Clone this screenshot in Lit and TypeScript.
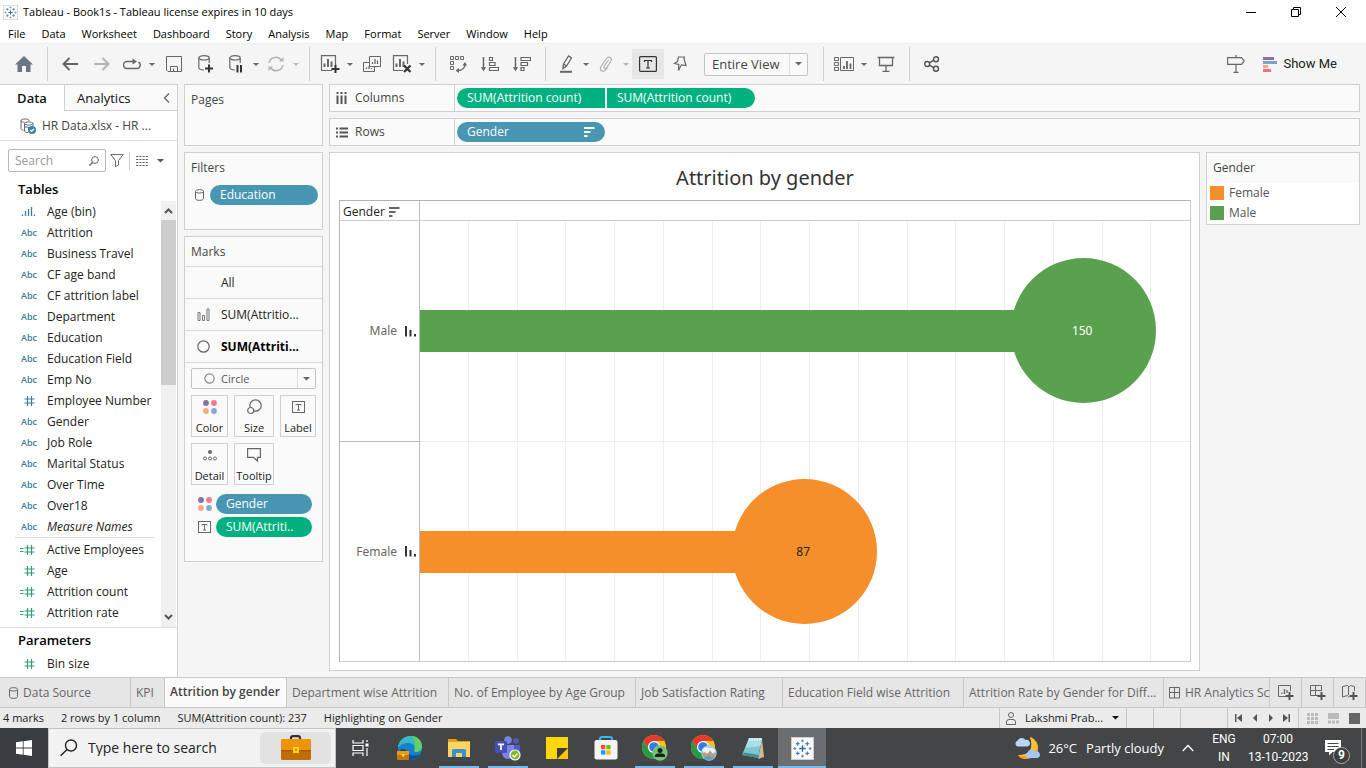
import { LitElement, html, svg, css, nothing } from "lit";
import type { TemplateResult, SVGTemplateResult } from "lit";
import { customElement } from "lit/decorators.js";
import { classMap } from "lit/directives/class-map.js";

const icon = (w: number, h: number, body: SVGTemplateResult, cls = "") =>
  html`<svg class="ic ${cls}" width=${w} height=${h} viewBox="0 0 ${w} ${h}" fill="none" aria-hidden="true">${body}</svg>`;

const G = "#666";

/* ---------- toolbar glyphs ---------- */
const home = icon(18, 16, svg`<path d="M9 0L18 8.5H15.5V16H11V10H7V16H2.500V8.500H0Z" fill="#6b7785"/>`);
const arrowL = icon(16, 14, svg`<path d="M7.500 1L1.500 7L7.500 13M1.500 7H16" stroke=${G} stroke-width="2"/>`);
const arrowR = icon(16, 14, svg`<path d="M8.500 1L14.500 7L8.500 13M14.500 7H0" stroke="#b4b4b4" stroke-width="2"/>`);
const redo = icon(18, 13, svg`<path d="M10 3.500H4A3.500 3.500 0 0 0 4 10.500H14A3.500 3.500 0 0 0 15.500 4" stroke=${G} stroke-width="1.500"/><path d="M9.500 0.500L14 3.500L9.500 6.500Z" fill=${G}/>`);
const save = icon(16, 16, svg`<path d="M.5 .5H15.500V15.500H2L.5 14ZM4.500 15V10.500H11.500V15M7.500 12.500V15" stroke=${G}/>`);
const cyl = svg`<ellipse cx="6" cy="2.800" rx="5.200" ry="2.200" stroke=${G} stroke-width="1.200"/><path d="M.8 3V12.500C1 14 3 15 6 15M11.200 3V8" stroke=${G} stroke-width="1.200"/>`;
const dbAdd = icon(16, 18, svg`${cyl}<path d="M11 9.500V17.500M7 13.500H15" stroke="#333" stroke-width="2"/>`);
const dbPause = icon(14, 18, svg`${cyl}<path d="M8.500 10V17.500M12 10V17.500" stroke="#333" stroke-width="2"/>`);
const refresh = icon(18, 16, svg`<path d="M2 7A6.800 6.800 0 0 1 14.500 4.500M16 9A6.800 6.800 0 0 1 3.500 11.500" stroke="#b4b4b4" stroke-width="1.500"/><path d="M12 5.500H16.500V1ZM6 10.500H1.500V15Z" fill="#b4b4b4"/>`);
const bars = svg`<path d="M4.500 12V8.500M8 12V4M11.500 12V6.500" stroke=${G} stroke-width="2"/>`;
const newSheet = icon(20, 18, svg`<path d="M12 15.500H1.500V.7H15.500V11" stroke=${G} stroke-width="1.200"/>${bars}<path d="M15.500 10V18M11.500 14H19.500" stroke="#333" stroke-width="2"/>`);
const clearSheet = icon(20, 18, svg`<path d="M11 15.500H1.500V.7H15.500V9" stroke=${G} stroke-width="1.200"/>${bars}<path d="M12 10.500L18.500 17M18.500 10.500L12 17" stroke="#333" stroke-width="2.200"/>`);
const dupSheet = icon(18, 16, svg`<path d="M6.500 .5H17.500V10.500H6.500ZM6 6.500H.5V15.500H11.500V11" stroke=${G}/><path d="M9.500 8V6M12 8V3M14.500 8V4.500M3.500 13V11.500M6 13V10M8.500 13V12" stroke=${G} stroke-width="1.300"/>`);
const swap = icon(17, 17, svg`<path d="M.5 .5H3.500V3.500H.5ZM5.500 .5H8.500V3.500H5.500ZM10.500 .5H13.500V3.500H10.500ZM.5 5.500H3.500V8.500H.5ZM.5 10.500H3.500V13.500H.5Z" stroke=${G}/><path d="M15 8C15 12 12 14.500 7.500 14.500" stroke=${G} stroke-width="1.400"/><path d="M12.500 9.500L15 6L17 9.500ZM9 12L5.500 14.500L9 17Z" fill=${G}/>`);
const sortAsc = icon(18, 15, svg`<path d="M2.500 0V12" stroke=${G} stroke-width="1.500"/><path d="M0 10H5L2.500 14.500Z" fill=${G}/><path d="M8.500 .5H11.500V3.500H8.500ZM8.500 5.500H14V8.500H8.500ZM8.500 10.500H17.500V13.500H8.500Z" stroke=${G} stroke-width="1.200"/>`);
const sortDesc = icon(18, 15, svg`<path d="M2.500 0V12" stroke=${G} stroke-width="1.500"/><path d="M0 10H5L2.500 14.500Z" fill=${G}/><path d="M8 .5H17.500V3.500H8ZM8 5.500H14.500V8.500H8ZM8 10.500H11V13.500H8Z" stroke=${G} stroke-width="1.200"/>`);
const pen = icon(14, 18, svg`<path d="M4.500 9L9.500 1L12.500 3L7.500 11L4 13.500ZM4.500 9L7.500 11" stroke=${G} stroke-width="1.300"/><path d="M1 16.800H13" stroke=${G} stroke-width="2"/>`);
const clip = icon(14, 16, svg`<path d="M9.500 4L5 10.500C4 12.500 6.500 13.500 7.500 12L12 5C13.500 2 9.500 -.5 7.500 2.500L2 10.500C-.3 14.500 4.500 17 7 13.500L9 10.500" stroke="#b0b0b0" stroke-width="1.200"/>`);
const textBox = icon(18, 16, svg`<rect x=".6" y=".6" width="16.800" height="14.800" rx="1" stroke="#333" stroke-width="1.200"/><path d="M5.500 6V4.500H12.500V6M9 4.500V12M7 12H11" stroke="#333" stroke-width="1.200"/>`);
const pin = icon(14, 16, svg`<path d="M5.500 1H11.500L11 3L12.500 7.500L13 9.500L8.500 8.800L5.500 14.500L5.800 8.500L1.500 7.500L4.500 5.500Z" stroke=${G} stroke-width="1.200"/>`);
const cards = icon(20, 15, svg`<path d="M.5 .5H4.500V3.500H.5ZM.5 5.500H4.500V8.500H.5ZM.5 10.500H4.500V13.500H.5ZM6.500 .5H19.500V13.500H6.500Z" stroke=${G}/><path d="M10 12V9M13 12V4M16.500 12V6.500" stroke=${G} stroke-width="1.800"/>`);
const present = icon(18, 16, svg`<path d="M.5 1.500H17.500M2.500 2V9.500H15.500V2M9 10V15M5.500 15.300H12.500" stroke=${G} stroke-width="1.300"/>`);
const share = icon(16, 16, svg`<circle cx="3.200" cy="8" r="2.500" stroke="#555" stroke-width="1.400"/><circle cx="12" cy="3.200" r="2.500" stroke="#555" stroke-width="1.400"/><circle cx="12" cy="12.800" r="2.500" stroke="#555" stroke-width="1.400"/><path d="M5.300 6.800L9.800 4.400M5.300 9.200L9.800 11.600" stroke="#555" stroke-width="1.400"/>`);
const sign = icon(18, 18, svg`<path d="M.6 2.600H14.500L17.300 6L14.500 9.400H.6ZM9 0V2.500M9 9.500V17M6.500 17.300H11.500" stroke=${G} stroke-width="1.200"/>`);
const showMe = icon(14, 15, svg`<path d="M0 0H11V3H0Z" fill="#88719b"/><path d="M0 4H14V7H0Z" fill="#7ba0cb"/><path d="M0 8H5V11H0Z" fill="#f4a880"/><path d="M0 12H8V15H0Z" fill="#f86e81"/>`);
const caretSvg = (w: number, c: string) => icon(w, Math.ceil(w / 2), svg`<path d="M0 0H${w}L${w / 2} ${w / 2}Z" fill=${c}/>`);

/* ---------- shared glyphs ---------- */
const tableau = (s: number) => html`<svg class="ic" width=${s} height=${s} viewBox="0 0 24 24" fill="none" aria-hidden="true">
  <rect width="24" height="24" fill="#fbfbfb"/><rect x=".5" y=".5" width="23" height="23" stroke="#ccc"/>
  <path d="M12 8.500V15.500M8.500 12H15.500" stroke="#2f6f9f" stroke-width="1.500"/>
  <path d="M7 5V9M5 7H9M17 5V9M15 7H19M7 15V19M5 17H9M17 15V19M15 17H19" stroke="#4b84ae" stroke-width="1.300"/>
  <path d="M12 2.500V5.500M10.500 4H13.500M12 18.500V21.500M10.500 20H13.500M4 10.500V13.500M2.500 12H5.500M20 10.500V13.500M18.500 12H21.500" stroke="#5f94b8" stroke-width="1.200"/></svg>`;
const dots = icon(14, 14, svg`<circle cx="3" cy="3" r="2.900" fill="#88719b"/><circle cx="11" cy="3" r="2.900" fill="#f8798a"/><circle cx="3" cy="11" r="2.900" fill="#f4ab82"/><circle cx="11" cy="11" r="2.900" fill="#87a7d0"/>`);
const labelT = icon(13, 12, svg`<rect x=".5" y=".5" width="12" height="11" stroke=${G}/><path d="M4 4.500V3.500H9V4.500M6.500 3.500V9M5 9H8" stroke=${G}/>`);
const sizeIc = icon(15, 16, svg`<circle cx="8.500" cy="6.500" r="5.700" stroke=${G} stroke-width="1.200"/><circle cx="3.700" cy="11.500" r="3" fill="#fafafa" stroke=${G} stroke-width="1.200"/>`);
const detailIc = icon(14, 11, svg`<circle cx="7" cy="2" r="2" fill=${G}/><circle cx="2" cy="8.500" r="1.500" stroke=${G}/><circle cx="7" cy="8.500" r="1.500" stroke=${G}/><circle cx="12" cy="8.500" r="1.500" stroke=${G}/>`);
const tipIc = icon(14, 14, svg`<path d="M.6 .6H13.400V9.400H10.500V13L6.500 9.400H.6Z" stroke=${G} stroke-width="1.200"/>`);
const sortMark = (c: string) => icon(11, 10, svg`<path d="M0 1H10.500M0 5H6.500M0 9H3.500" stroke=${c} stroke-width="2"/>`);
const miniBars = icon(11, 11, svg`<path d="M1 0V10.500M5.500 4V10.500M10 8V10.500" stroke="#333" stroke-width="2"/>`);
const cylSm = icon(9, 12, svg`<path d="M.5 2.500C.5 0 8.500 0 8.500 2.500V9.500C8.500 12 .5 12 .5 9.500ZM.5 2.500C.5 4.500 8.500 4.500 8.500 2.500" stroke=${G}/>`);
const dash = icon(11, 12, svg`<path d="M.5 .5H10.500V11H.5ZM5.500 .5V11M.5 5.500H10.500" stroke=${G}/>`);

const typeIcon = (t: string) => {
  if (t === "abc") return html`<span class="abc">Abc</span>`;
  if (t === "bin") return icon(16, 10, svg`<path d="M2.500 9V7.500M5.500 9V4M8.500 9V2M11.500 9V0M14.500 9V7.500" stroke="#3a7d96" stroke-width="1.300"/>`);
  const c = t === "numb" ? "#3a7d96" : "#2f9e72";
  return icon(15, 10, svg`<path d="M7.500 0V10M11.500 0V10M4.500 3H14.500M4.500 7H14.500" stroke=${c} stroke-width="1.200"/>${t === "calc" ? svg`<path d="M0 3.500H3.500M0 6.500H3.500" stroke=${c}/>` : nothing}`);
};

/* ---------- taskbar glyphs ---------- */
const win = icon(16, 16, svg`<path d="M0 2.300L6.800 1.300V7.600H0ZM7.600 1.200L16 0V7.600H7.600ZM0 8.400H6.800V14.700L0 13.700ZM7.600 8.400H16V16L7.600 14.800Z" fill="#fff"/>`);
const search = icon(18, 18, svg`<circle cx="11" cy="6.500" r="5.500" stroke="#222" stroke-width="1.400"/><path d="M7 10.500L.7 16.800" stroke="#222" stroke-width="1.400"/>`);
const briefcase = icon(32, 26, svg`<path d="M11 5V3C11 1.800 12 1.200 13 1.200H18C19.300 1.200 20 2 20 3V5" stroke="#333" stroke-width="2.200"/><rect x="1" y="4" width="30" height="21" rx="1.500" fill="#c06e07"/><path d="M1 5.500Q1 4 2.500 4H29.500Q31 4 31 5.500V15H1Z" fill="#ef9309"/><path d="M1 15H31V16.500H1Z" fill="#a85a05"/><rect x="13" y="12" width="6" height="6" fill="#f8d915"/><rect x="15" y="14" width="2" height="2" fill="#b98b08"/>`);
const taskview = icon(17, 16, svg`<path d="M1 0V3H11V0M1 16V13H11V16M1 5.500H11V10.500H1ZM15 0V2M15 8V16" stroke="#fff" stroke-width="1.200"/><rect x="13.500" y="3.500" width="3" height="3" fill="#fff"/>`);
const edge = icon(26, 26, svg`<circle cx="13" cy="13" r="12" fill="#1580cc"/><path d="M1 13C1 6 7 1 13 1C20 1 25 6 25 11.500C25 16 21 17.500 17 16.500C19 12 16 8 11.500 8C6 8 2 10.500 1 13Z" fill="#37b9c5"/><path d="M14 1C21 1 25 6 25 11.500C25 16 21 17.500 17 16.500C19.500 12 18 4 14 1Z" fill="#62cf61"/><path d="M10 14C10 20 16 22.500 23 19C19 25 12 26 9 24Z" fill="#0b4f9e"/><path d="M4 16V15H8V16" stroke="#222"/><rect x="0" y="16" width="12" height="9" rx="1" fill="#c9770c"/><path d="M0 16H12V20H0Z" fill="#f09a12"/><rect x="5" y="19" width="2.500" height="2.500" fill="#fbe02b"/>`);
const explorer = icon(22, 20, svg`<path d="M0 1H8L10 3H22V18H0Z" fill="#e6a212"/><path d="M0 4H22V19H0Z" fill="#fcd462"/><path d="M4 19V12.500Q4 11 5.500 11H16.500Q18 11 18 12.500V19H14V15H8V19Z" fill="#3b8fd6"/>`);
const teams = icon(26, 25, svg`<circle cx="13" cy="4" r="3.800" fill="#7b83eb"/><circle cx="21" cy="5" r="2.800" fill="#5059c9"/><path d="M15 9H25V17A5 5 0 0 1 16 20Z" fill="#5059c9"/><path d="M7 9H19V17A6 6 0 0 1 7 17Z" fill="#7b83eb"/><rect x="0" y="5" width="12" height="12" rx="1" fill="#464eb8"/><path d="M3 8.300H9M6 8.300V14" stroke="#fff" stroke-width="1.700"/><circle cx="20" cy="19" r="5" fill="#7db51a" stroke="#fff" stroke-width="1.200"/><path d="M17.500 19L19.300 20.900L22.500 17.500" stroke="#fff" stroke-width="1.400"/>`);
const sticky = icon(22, 22, svg`<path d="M0 0H22V22H0Z" fill="#ffd60a"/><path d="M22 11V22H11Z" fill="#ffc400"/><path d="M11 22V11H22Z" fill="#3b3b3b"/>`);
const store = icon(24, 24, svg`<path d="M6 6V3Q6 1 8 1H16Q18 1 18 3V6" stroke="#35b8ef" stroke-width="2"/><rect x=".5" y="4" width="23" height="19.500" rx="2" fill="#f4f4f4"/><path d="M7 9H11.300V13.300H7Z" fill="#f25022"/><path d="M12.300 9H16.600V13.300H12.300Z" fill="#7fba00"/><path d="M7 14.300H11.300V18.600H7Z" fill="#00a4ef"/><path d="M12.300 14.300H16.600V18.600H12.300Z" fill="#ffb900"/>`);
const chromeBase = svg`<circle cx="12" cy="12" r="12" fill="#fbc116"/><path d="M12 0A12 12 0 0 1 22.400 6H12L6.800 15L1.600 6A12 12 0 0 1 12 0Z" fill="#e33b2e"/><path d="M1.600 6A12 12 0 0 0 12 24L17 15A6 6 0 0 1 6.800 15Z" fill="#249b48"/><circle cx="12" cy="12" r="6" fill="#fff"/><circle cx="12" cy="12" r="4.800" fill="#2f7de9"/>`;
const chromeA = icon(26, 26, svg`${chromeBase}<circle cx="18" cy="18" r="7.700" fill="#76c079"/><circle cx="18" cy="15.500" r="2.500" fill="#16241a"/><path d="M13 22V21Q13 18.500 16 18.500H20Q23 18.500 23 21V22Z" fill="#16241a"/>`);
const chromeB = icon(26, 26, svg`${chromeBase}<circle cx="18" cy="18" r="7.700" fill="#9ecae8"/><path d="M11 15Q14 11 18 13Q22 12 25 16L22 18H13Z" fill="#e9f4fa"/><path d="M10.700 19L14 17L16 19L19 15.500L22 19L25 18.500A7.700 7.700 0 0 1 23 23L14 23.500Z" fill="#b79d7c"/><path d="M12.500 23L17 21L23 23A7.700 7.700 0 0 1 12.500 23Z" fill="#4ea3c9"/>`);
const notepad = icon(22, 22, svg`<path d="M20 2L22 20L16 22Z" fill="#ccb98f"/><path d="M7 1H20L16 21L0 18Z" fill="#7fc6d3"/><path d="M7 1H20L18.500 9L3.500 11Z" fill="#a9e0e6"/><path d="M0 18L16 21L16.500 18L2 15.500Z" fill="#418c9b"/><path d="M7 2.500H20" stroke="#e7f5f6" stroke-width="2" stroke-dasharray="1.500 1"/>`);
const weather = icon(26, 24, svg`<path d="M15 1C27 5 26 23 11 23C6 23 4 21 3 19C15 20 19 12 15 1Z" fill="#f5a01d"/><path d="M15 1C22 4 24 11 21 15C17 20 9 21 3 19C15 20 19 12 15 1Z" fill="#fbc13e"/><path d="M2.500 10.500A3 3 0 0 1 2.500 4.800A4.500 4.500 0 0 1 10.500 4A3.300 3.300 0 0 1 12.500 10.500Z" fill="#b9d4fb"/><path d="M12.500 22A3 3 0 0 1 12.500 16.500A4.500 4.500 0 0 1 20.500 15.500A3.300 3.300 0 0 1 22.500 22Z" fill="#a6c5f5"/>`);

interface Mark { name: string; value: number; tone: string; }
const marks: Mark[] = [
  { name: "Male", value: 150, tone: "male" },
  { name: "Female", value: 87, tone: "female" },
];
/* The marks axis runs to about 174 heads across the pane. */
const axisMax = 173.9;
const gridLines = Array.from({ length: 15 });

@customElement("app-root")
export class AppRoot extends LitElement {
  static styles = css`
    :host { display: block; height: 100vh; min-height: 640px; color: #222; font: 12px/16px "Open Sans", "Noto Sans", sans-serif; }
    * { box-sizing: border-box; }
    button, input, select { font: inherit; color: inherit; margin: 0; }
    button { border: 0; background: none; padding: 0; display: inline-flex; align-items: center; justify-content: center; }
    a { color: inherit; text-decoration: none; }
    ul { list-style: none; margin: 0; padding: 0; }
    h1, h2, h3 { margin: 0; font: inherit; }
    .ic { display: block; flex: none; }
    .app { height: 100%; display: flex; flex-direction: column; background: #f5f5f5; overflow: hidden; white-space: nowrap; }

    .title { height: 24px; flex: none; display: flex; align-items: center; gap: 5px; padding: 0 3px; background: #fff; color: #000; font-size: 11px; }
    .title h1 { flex: 1; }
    .wc { width: 45px; height: 22px; }
    .menu { height: 19px; flex: none; display: flex; align-items: center; gap: 16px; padding: 1px 0 0 8px; background: #fff; color: #000; font-size: 11px; }

    .tools { height: 41px; flex: none; display: flex; align-items: center; border-top: 1px solid #eee; }
    .grp { display: flex; align-items: center; padding: 0 7px 0 6px; height: 34px; border-right: 1px solid #d0d0d0; }
    .grp.first { padding: 0; }
    .grp.last { border: 0; }
    .tb { width: 32px; height: 30px; }
    .tb.home { width: 47px; }
    .tb.m { width: 28px; }
    .tb.c { width: 12px; }
    .tb.on { background: #e6e6e6; }
    .grp.fit { padding-right: 15px; }
    .sel { position: relative; display: flex; align-items: center; border: 1px solid #c4c4c4; background: #fafafa; border-radius: 2px; }
    .sel select { appearance: none; border: 0; background: none; width: 100%; height: 100%; outline: 0; padding: 0 18px 0 7px; }
    .sel .arr { position: absolute; right: 0; top: 0; bottom: 0; width: 18px; display: grid; place-items: center; border-left: 1px solid #ddd; pointer-events: none; }
    .fitbox { width: 104px; height: 23px; margin-left: 8px; color: #444; font-size: 13px; }
    .grow { flex: 1; }
    .showme { gap: 6px; padding: 0 29px 0 18px; font: 13px/18px Roboto, sans-serif; color: #222; }

    .main { flex: 1; min-height: 0; display: grid; grid-template-columns: 178px 139px minmax(0, 1fr); column-gap: 6px; }
    .data { background: #fff; border-right: 1px solid #d0d0d0; border-top: 1px solid #d0d0d0; display: flex; flex-direction: column; min-height: 0; overflow: hidden; }
    .dtabs { display: flex; height: 26px; flex: none; font-size: 13px; color: #111; }
    .dtabs .cur { width: 64px; font-weight: 600; }
    .dtabs .rest { flex: 1; display: flex; justify-content: space-between; align-items: center; padding: 0 7px 0 12px; background: #fafafa; border-left: 1px solid #d0d0d0; border-bottom: 1px solid #d0d0d0; }
    .src { height: 30px; flex: none; display: flex; align-items: center; gap: 6px; padding-left: 20px; border-bottom: 1px solid #e0e0e0; color: #444; }
    .find { display: flex; align-items: center; height: 39px; flex: none; padding-left: 8px; }
    .box { width: 98px; height: 23px; display: flex; align-items: center; border: 1px solid #b8b8b8; border-radius: 2px; padding: 0 6px; }
    .box input { border: 0; outline: 0; padding: 0; background: none; width: 100%; min-width: 0; }
    .box input::placeholder { color: #999; }
    .find .filt { margin: 0 5px 0 4px; }
    .find .view { border-left: 1px solid #ccc; height: 18px; padding-left: 6px; gap: 9px; }
    h2.sec { font: 600 13px/18px "Open Sans", sans-serif; color: #000; padding-left: 18px; flex: none; }
    .tables { height: 21px; }
    .scroll { display: flex; flex: 1; min-height: 0; }
    .fields { flex: 1; min-width: 0; overflow: hidden; color: #222; }
    .bar { width: 15px; background: #f0f0f0; display: flex; flex-direction: column; align-items: center; padding: 7px 0; margin-right: 1px; }
    .bar .thumb { width: 15px; flex: 0 0 40%; background: #cdcdcd; margin-top: 6px; }
    .bar .space { flex: 1; }
    .f { display: grid; grid-template-columns: 27px 1fr; align-items: center; height: 21px; padding-left: 20px; }
    .f.i { font-style: italic; }
    .abc { font: 600 9px/12px "Open Sans", sans-serif; color: #3a7d96; padding-left: 1px; }
    .meas { border-top: 1px solid #ddd; margin: 0 7px 0 15px; padding-top: 1px; }
    .meas .f { padding-left: 5px; }
    .params { border-top: 1px solid #ddd; padding: 3px 0; flex: none; }
    .params .f { margin-top: 4px; }

    .side { display: flex; flex-direction: column; gap: 6px; min-width: 0; }
    .card { background: #fafafa; border: 1px solid #d0d0d0; color: #444; }
    .card h3 { padding: 7px 6px 6px; }
    .pages { height: 62px; }
    .filters { height: 78px; }
    .marks { height: 326px; }
    .pill { display: flex; align-items: center; justify-content: space-between; height: 20px; border-radius: 10px; color: #fff; background: #4996b2; padding: 0 10px; font-weight: 500; }
    .pill.g { background: #00b180; }
    .pill.flat { border-radius: 10px 0 0 10px; }
    .pill.flat + .pill { border-radius: 0 10px 10px 0; }
    .frow { display: flex; align-items: center; gap: 6px; padding: 3px 4px 0 10px; }
    .frow .pill { flex: 1; }
    .mk { display: grid; grid-template-columns: 36px 1fr; align-items: center; width: 100%; height: 32px; border-top: 1px solid #d8d8d8; justify-items: start; color: #222; }
    .mk .ic { justify-self: center; }
    .mk.cur { font-weight: 700; color: #000; }
    .mtype { border-top: 1px solid #d8d8d8; padding: 5px 6px 0; }
    .shape { height: 21px; font-size: 11px; color: #555; }
    .shape .o { margin-left: 12px; }
    .shape select { padding-left: 6px; }
    .btns { display: grid; grid-template-columns: 37px 40px 36px; gap: 6px; padding: 6px 6px 0; }
    .btns button { height: 42px; border: 1px solid #d0d0d0; flex-direction: column; justify-content: flex-end; gap: 3px; font-size: 11px; line-height: 16px; color: #222; }
    .btns .pic { height: 20px; display: grid; place-items: center; }
    .enc { display: grid; grid-template-columns: 14px 96px; align-items: center; gap: 3px 4px; padding: 9px 0 0 13px; }

    .work { display: flex; flex-direction: column; gap: 6px; min-width: 0; min-height: 0; padding: 0 6px 6px 0; }
    .shelf { height: 28px; flex: none; display: flex; align-items: center; background: #fafafa; border: 1px solid #d0d0d0; }
    .shelf .lab { width: 125px; height: 26px; display: flex; align-items: center; gap: 7px; padding-left: 6px; border-right: 1px solid #d0d0d0; color: #444; }
    .pills { display: flex; gap: 2px; padding-left: 2px; }
    .pills .pill { width: 148px; }
    .lower { flex: 1; min-height: 0; display: grid; grid-template-columns: minmax(0, 1fr) 154px; grid-template-rows: minmax(0, 1fr); column-gap: 6px; align-items: start; }
    .viz { height: 100%; background: #fff; border: 1px solid #d0d0d0; padding: 0 8px 8px 9px; display: flex; flex-direction: column; }
    .viz h2 { height: 47px; display: flex; align-items: center; justify-content: center; font: 400 20px/28px "Noto Sans", sans-serif; color: #333; padding-top: 2px; }
    .chart { flex: 1; min-height: 0; border: 1px solid #b4b4b4; border-right-color: #ccc; border-bottom-color: #ccc; display: grid; grid-template-columns: 80px minmax(0, 1fr); grid-template-rows: 20px 1fr 1fr; }
    .hd { border-bottom: 1px solid #d0d0d0; display: flex; align-items: center; gap: 4px; padding: 2px 0 0 3px; color: #222; }
    .hd:first-child, .rl { border-right: 1px solid #c0c0c0; }
    .rl { display: flex; align-items: center; justify-content: flex-end; gap: 8px; padding-right: 3px; color: #666; font-family: "Noto Sans", sans-serif; }
    .rl.r1 { border-top: 1px solid #b8b8b8; }
    .rp { position: relative; display: flex; align-items: center; }
    .rp.r1 { border-top: 1px solid #ececec; }
    .grid { position: absolute; inset: 0; display: flex; }
    .grid i { flex: 0 0 6.335%; border-right: 1px solid #efefef; }
    .b { position: relative; height: 42px; }
    .male { background: #59a14f; color: #fff; }
    .female { background: #f58f2c; color: #222; }
    .dot { position: absolute; right: -72px; top: -52px; width: 145px; height: 145px; border-radius: 50%; display: grid; place-items: center; font-family: "Noto Sans", sans-serif; padding: 1px 3px 0 0; }
    .legend { background: #fff; border: 1px solid #d0d0d0; color: #555; padding-bottom: 1px; }
    .legend h3 { background: #fafafa; padding: 7px 6px; color: #444; }
    .legend li { display: flex; align-items: center; gap: 5px; height: 20px; padding-left: 3px; }
    .sw { width: 14px; height: 14px; }

    .tabs { height: 31px; flex: none; display: grid; grid-template-columns: 131px 34px 122px 162px 187px 147px 181px 200px minmax(0, 1fr) 32px 32px 32px; background: #e6e6e6; border-top: 1px solid #c8c8c8; border-bottom: 1px solid #c8c8c8; color: #666; }
    .tabs > * { border-right: 1px solid #c8c8c8; display: flex; align-items: center; padding-left: 5px; gap: 5px; }
    .tabs > .ds { padding-left: 9px; }
    .tabs > button { padding: 0; justify-content: center; }
    .tabs .act { background: #fafafa; font-weight: 600; color: #444; padding-bottom: 2px; }
    .status { height: 20px; flex: none; display: flex; background: #ebebeb; font-size: 11px; line-height: 20px; color: #222; }
    .status .info { flex: 1; display: flex; gap: 17px; padding-left: 3px; }
    .cell { border-left: 1px solid #c8c8c8; display: flex; align-items: center; width: 27px; }
    .cell.user { width: 127px; gap: 9px; padding-left: 6px; }
    .cell.w { width: 47px; }
    .cell.nav { width: 71px; justify-content: space-around; padding: 0 3px; }
    .cell.lay { width: 68px; justify-content: space-between; padding: 0 6px 0 8px; }

    .task { height: 40px; flex: none; display: flex; align-items: stretch; background: #434546; color: #fff; }
    .start { width: 48px; background: #3a3d40; }
    .wsearch { width: 288px; background: #f2f2f2; border: 1px solid #c4c4c4; display: flex; align-items: center; padding: 0 4px 0 11px; gap: 10px; }
    .wsearch input { border: 0; background: none; outline: 0; padding: 0; flex: 1; min-width: 0; font-size: 14px; color: #222; }
    .wsearch input::placeholder { color: #222; opacity: 1; }
    .hl { width: 71px; height: 32px; border-radius: 6px; background: #e2e2e2; }
    .apps { display: flex; flex: 1; gap: 1px; }
    .ap { width: 48px; position: relative; }
    .ap:first-child { margin-right: 1px; }
    .ap.run::after { content: ""; position: absolute; left: 4px; right: 4px; bottom: 0; height: 2px; background: #76b9ed; }
    .ap.cur { background: #6b6e70; }
    .ap.cur::after { left: 0; right: 0; }
    .tray { display: flex; align-items: center; font-size: 13px; }
    .wx { gap: 7px; color: #fff; }
    .wx span + span { margin-left: 2px; }
    .chev { width: 48px; }
    .two { font: 12px/18px Roboto, sans-serif; text-align: center; }
    .two.lang { width: 24px; }
    .clock { width: 60px; margin: 0 17px 0 12px; }
    .note { width: 24px; position: relative; }
    .badge { position: absolute; left: 8px; top: 10px; width: 17px; height: 17px; border-radius: 50%; background: #3c3e40; border: 1px solid #aaa; font: 700 12px/15px Roboto, sans-serif; text-align: center; }
    .peek { margin-left: 12px; border-left: 1px solid #777; height: 40px; width: 5px; }
  `;

  private tool(label: string, glyph: TemplateResult, cls = "") {
    return html`<button class="tb ${cls}" aria-label=${label}>${glyph}</button>`;
  }
  private drop(label: string, off = false) {
    return this.tool(label, caretSvg(6, off ? "#b4b4b4" : "#666"), "c");
  }
  private field(type: string, name: string, italic = false) {
    return html`<li class=${classMap({ f: true, i: italic })}>${typeIcon(type)}<span>${name}</span></li>`;
  }

  private renderTools() {
    return html`<div class="tools" role="toolbar" aria-label="Toolbar">
      <div class="grp first">${this.tool("Home", home, "home")}</div>
      <div class="grp">
        ${this.tool("Undo", arrowL)}${this.tool("Redo", arrowR)}${this.tool("Replay", redo, "m")}${this.drop("Replay options")}
        ${this.tool("Save", save)}${this.tool("New data source", dbAdd)}${this.tool("Pause updates", dbPause, "m")}${this.drop("Update options")}
        ${this.tool("Run update", refresh, "m")}${this.drop("Run options", true)}
      </div>
      <div class="grp">
        ${this.tool("New worksheet", newSheet, "m")}${this.drop("New options")}${this.tool("Duplicate", dupSheet)}
        ${this.tool("Clear sheet", clearSheet, "m")}${this.drop("Clear options")}
      </div>
      <div class="grp">${this.tool("Swap", swap)}${this.tool("Sort ascending", sortAsc)}${this.tool("Sort descending", sortDesc)}</div>
      <div class="grp fit">
        ${this.tool("Highlight", pen, "m")}${this.drop("Highlight options")}${this.tool("Group", clip, "m")}${this.drop("Group options", true)}
        ${this.tool("Show mark labels", textBox, "on")}${this.tool("Fix axes", pin)}
        <div class="sel fitbox"><select aria-label="Fit"><option>Entire View</option></select><span class="arr">${caretSvg(7, "#666")}</span></div>
      </div>
      <div class="grp">${this.tool("Show cards", cards, "m")}${this.drop("Card options")}${this.tool("Presentation mode", present)}</div>
      <div class="grp last">${this.tool("Share", share)}</div>
      <div class="grow"></div>
      <button aria-label="Guide">${sign}</button>
      <button class="showme">${showMe}Show Me</button>
    </div>`;
  }

  private renderData() {
    const dims = ["Attrition", "Business Travel", "CF age band", "CF attrition label", "Department", "Education", "Education Field", "Emp No"];
    const dims2 = ["Gender", "Job Role", "Marital Status", "Over Time", "Over18"];
    return html`<aside class="data">
      <div class="dtabs"><button class="cur">Data</button><div class="rest"><button>Analytics</button>
        <button aria-label="Collapse">${icon(7, 12, svg`<path d="M6 1.500L1.500 6L6 10.500" stroke=${G} stroke-width="1.300"/>`)}</button></div></div>
      <div class="src">${icon(16, 16, svg`<path d="M1 2.500C1 .5 9 .5 9 2.500V3M1 2.500V10.500C1 11.500 2 12 3.500 12.200M1 2.500C1 4 3 4.300 4.500 4.300M4.500 5.500C4.500 3.500 13 3.500 13 5.500V8M4.500 5.500V13C5 14 6 14.500 8 14.500M4.500 5.500C5 7.500 12 7.500 13 5.500M4.500 9H8.500V12" stroke=${G}/><circle cx="12" cy="12" r="4" fill="#3a83a5"/><path d="M10.200 12L11.600 13.400L14 10.800" stroke="#fff" stroke-width="1.200"/>`)}<span>HR Data.xlsx - HR ...</span></div>
      <div class="find">
        <div class="box"><input aria-label="Search fields" placeholder="Search" />${icon(10, 10, svg`<circle cx="6" cy="4" r="3.400" stroke=${G}/><path d="M3.500 6.500L.4 9.600" stroke=${G} stroke-width="1.400"/>`)}</div>
        <button class="filt" aria-label="Filter">${icon(14, 13, svg`<path d="M.7 .6H13.300L8.500 6.500V11L5.500 12.500V6.500Z" stroke=${G}/>`)}</button>
        <button class="view" aria-label="View as">${icon(12, 10, svg`<path d="M0 .5H12M0 3.500H12M0 6.500H12M0 9.500H12" stroke=${G} stroke-dasharray="2.250 1"/>`)}${caretSvg(7, "#555")}</button>
      </div>
      <h2 class="sec tables">Tables</h2>
      <div class="scroll">
        <div class="fields">
          <ul>${this.field("bin", "Age (bin)")}${dims.map((d) => this.field("abc", d))}${this.field("numb", "Employee Number")}
            ${dims2.map((d) => this.field("abc", d))}${this.field("abc", "Measure Names", true)}</ul>
          <ul class="meas">${this.field("calc", "Active Employees")}${this.field("num", "Age")}${this.field("calc", "Attrition count")}${this.field("calc", "Attrition rate")}</ul>
        </div>
        <div class="bar">${icon(9, 6, svg`<path d="M1 5L4.500 1.500L8 5" stroke="#555" stroke-width="2"/>`)}<div class="thumb"></div><div class="space"></div>${icon(9, 6, svg`<path d="M1 1L4.500 4.500L8 1" stroke="#555" stroke-width="2"/>`)}</div>
      </div>
      <div class="params"><h2 class="sec">Parameters</h2><ul>${this.field("num", "Bin size")}</ul></div>
    </aside>`;
  }

  private renderSide() {
    return html`<div class="side">
      <section class="card pages"><h3>Pages</h3></section>
      <section class="card filters"><h3>Filters</h3><div class="frow">${cylSm}<div class="pill">Education</div></div></section>
      <section class="card marks"><h3>Marks</h3>
        <button class="mk"><span></span>All</button>
        <button class="mk">${icon(13, 13, svg`<path d="M1 4.500H3V12.500H1ZM5.500 7.500H7.500V12.500H5.500ZM10 1H12V12.500H10Z" stroke="#777"/>`)}SUM(Attritio...</button>
        <button class="mk cur">${icon(13, 13, svg`<circle cx="6.500" cy="6.500" r="5.700" stroke=${G} stroke-width="1.200"/>`)}SUM(Attriti...</button>
        <div class="mtype"><div class="sel shape"><span class="o">${icon(11, 11, svg`<circle cx="5.500" cy="5.500" r="4.600" stroke="#888" stroke-width="1.200"/>`)}</span>
          <select aria-label="Mark type"><option>Circle</option></select><span class="arr">${caretSvg(7, "#666")}</span></div></div>
        <div class="btns">
          ${[["Color", dots], ["Size", sizeIc], ["Label", labelT], ["Detail", detailIc], ["Tooltip", tipIc]].map(([n, g]) => html`<button><span class="pic">${g}</span>${n}</button>`)}
        </div>
        <div class="enc">${dots}<div class="pill">Gender</div>${labelT}<div class="pill g">SUM(Attriti..</div></div>
      </section>
    </div>`;
  }

  private renderWork() {
    return html`<main class="work">
      <div class="shelf"><div class="lab">${icon(12, 12, svg`<path d="M1.500 0V2M1.500 3.500V12M5.500 0V2M5.500 3.500V12M9.500 0V2M9.500 3.500V12" stroke="#555" stroke-width="2"/>`)}Columns</div>
        <div class="pills"><div class="pill g flat">SUM(Attrition count)</div><div class="pill g">SUM(Attrition count)</div></div></div>
      <div class="shelf"><div class="lab">${icon(12, 11, svg`<path d="M0 1.500H2M3.500 1.500H12M0 5.500H2M3.500 5.500H12M0 9.500H2M3.500 9.500H12" stroke="#555" stroke-width="2"/>`)}Rows</div>
        <div class="pills"><div class="pill">Gender${sortMark("#fff")}</div></div></div>
      <div class="lower">
        <section class="viz"><h2>Attrition by gender</h2>
          <div class="chart">
            <div class="hd">Gender ${sortMark("#666")}</div><div class="hd"></div>
            ${marks.map((m, i) => html`<div class="rl r${i}">${m.name}${miniBars}</div>
              <div class="rp r${i}"><div class="grid">${gridLines.map(() => html`<i></i>`)}</div>
                <div class="b ${m.tone}" style="width:${((m.value / axisMax) * 100).toFixed(2)}%"><span class="dot ${m.tone}">${m.value}</span></div></div>`)}
          </div>
        </section>
        <aside class="legend"><h3>Gender</h3><ul>
          <li><span class="sw female"></span>Female</li><li><span class="sw male"></span>Male</li></ul></aside>
      </div>
    </main>`;
  }

  private renderTabs() {
    const plus = svg`<path d="M11.500 7V15M7.500 11H15.500" stroke="#555" stroke-width="2"/>`;
    return html`<nav class="tabs" aria-label="Sheets">
      <a class="ds" href="#source">${cylSm}Data Source</a><a href="#kpi">KPI</a><a class="act" href="#attrition" aria-current="page">Attrition by gender</a>
      <a href="#dept">Department wise Attrition</a><a href="#age">No. of Employee by Age Group</a><a href="#job">Job Satisfaction Rating</a>
      <a href="#edu">Education Field wise Attrition</a><a href="#rate">Attrition Rate by Gender for Diff...</a><a href="#hr">${dash}<span>HR Analytics Sc</span></a>
      <button aria-label="New worksheet">${icon(16, 15, svg`<path d="M8 11.500H.5V.5H12.500V6" stroke=${G}/><path d="M4 9V7.500M6.500 9V4M9 8V5" stroke=${G} stroke-width="1.300"/>${plus}`)}</button>
      <button aria-label="New dashboard">${icon(16, 15, svg`<path d="M8 10.500H.5V.5H11.500V6M5.500 .5V10.500M.5 5.500H11.500" stroke=${G}/>${plus}`)}</button>
      <button aria-label="New story">${icon(16, 15, svg`<path d="M7 12.500L5.500 10.500L.5 12V1.500L5.500 .5L7 2L8.500 .5L12.500 1.500V6M6.500 2V10" stroke=${G}/>${plus}`)}</button>
    </nav>`;
  }

  private renderStatus() {
    const d = (p: string, w = 8) => icon(w, 8, svg`<path d=${p} fill="#555"/>`);
    return html`<footer class="status">
      <div class="info"><span>4 marks</span><span>2 rows by 1 column</span><span>SUM(Attrition count): 237</span><span>Highlighting on Gender</span></div>
      <div class="cell user">${icon(10, 13, svg`<circle cx="5" cy="3" r="2.500" stroke=${G}/><path d="M.5 12.500V10Q.5 7.500 3 7.500H7Q9.500 7.500 9.500 10V12.500Z" stroke=${G}/>`)}<span>Lakshmi Prab...</span>${caretSvg(7, "#111")}</div>
      <div class="cell"></div><div class="cell"></div><div class="cell w"></div>
      <div class="cell nav">${d("M0 0H1.500V8H0ZM7 0V8L2 4Z")}${d("M6 0V8L2 4Z")}${d("M2 0V8L6 4Z")}${d("M5.500 0H7V8H5.500ZM0 0V8L5 4Z")}</div>
      <div class="cell lay">
        ${icon(11, 11, svg`<path d="M0 1.500H11M0 5.500H11M0 9.500H11" stroke="#bbb" stroke-width="3" stroke-dasharray="3 1"/>`)}
        ${icon(11, 11, svg`<path d="M0 0H11V6H0Z" fill="#bbb"/><path d="M0 9H11" stroke="#bbb" stroke-width="3" stroke-dasharray="3 1"/>`)}
        ${icon(11, 11, svg`<path d="M0 0H11V11H0Z" fill="#666"/>`)}</div>
    </footer>`;
  }

  private renderTask() {
    const apps: [string, TemplateResult, string][] = [
      ["Task view", taskview, ""], ["Edge", edge, ""], ["File Explorer", explorer, "run"], ["Teams", teams, "run"], ["Sticky Notes", sticky, ""],
      ["Store", store, ""], ["Chrome", chromeA, "run"], ["Chrome profile 2", chromeB, "run"], ["Notepad", notepad, "run"], ["Tableau", tableau(23), "run cur"],
    ];
    return html`<div class="task">
      <button class="start" aria-label="Start">${win}</button>
      <div class="wsearch">${search}<input aria-label="Search Windows" placeholder="Type here to search" /><button class="hl" aria-label="Search highlight">${briefcase}</button></div>
      <div class="apps">${apps.map(([n, g, c]) => html`<button class="ap ${c}" aria-label=${n}>${g}</button>`)}</div>
      <div class="tray">
        <button class="wx">${weather}<span>26°C</span><span>Partly cloudy</span></button>
        <button class="chev" aria-label="Hidden icons">${icon(12, 8, svg`<path d="M.7 7L6 1.500L11.300 7" stroke="#fff" stroke-width="1.300"/>`)}</button>
        <div class="two lang">ENG<br />IN</div><div class="two clock">07:00<br />13-10-2023</div>
        <button class="note" aria-label="Notifications">${icon(24, 22, svg`<path d="M0 3H16V15H7.500L4 18.500V15H0Z" fill="#fff"/><path d="M2.500 6.500H13.500M2.500 9.500H13.500M2.500 12.500H9" stroke="#434546"/>`)}<span class="badge">9</span></button>
        <div class="peek"></div>
      </div>
    </div>`;
  }

  render() {
    const menu = ["File", "Data", "Worksheet", "Dashboard", "Story", "Analysis", "Map", "Format", "Server", "Window", "Help"];
    return html`<div class="app">
      <header class="title">${tableau(15)}<h1>Tableau - Book1s - Tableau license expires in 10 days</h1>
        <div><button class="wc" aria-label="Minimize">${icon(10, 10, svg`<path d="M0 5.500H10" stroke="#000"/>`)}</button><button class="wc" aria-label="Restore">${icon(10, 10, svg`<path d="M.5 2.500H7.500V9.500H.5ZM2.500 2.500V.5H9.500V7.500H7.500" stroke="#000"/>`)}</button><button class="wc" aria-label="Close">${icon(10, 10, svg`<path d="M0 0L10 10M10 0L0 10" stroke="#000"/>`)}</button></div>
      </header>
      <nav class="menu">${menu.map((m) => html`<a href="#${m}">${m}</a>`)}</nav>
      ${this.renderTools()}
      <div class="main">${this.renderData()}${this.renderSide()}${this.renderWork()}</div>
      ${this.renderTabs()}${this.renderStatus()}${this.renderTask()}
    </div>`;
  }
}
